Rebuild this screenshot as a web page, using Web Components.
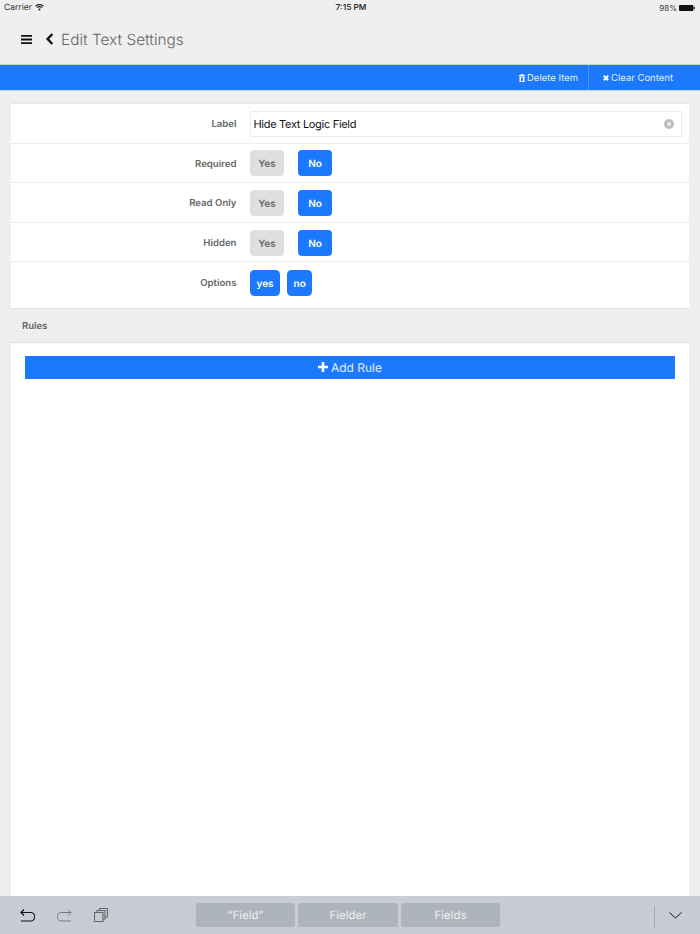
<!DOCTYPE html>
<html>
<head>
<meta charset="utf-8">
<title>Edit Text Settings</title>
<style>
    html, body { margin: 0; height: 100%; }
    body {
        width: 700px;
        height: 934px;
        overflow: hidden;
        display: flex;
        flex-direction: column;
        background: #efefef;
        font-family: Inter, "Liberation Sans", sans-serif;
        text-rendering: geometricPrecision;
    }
</style>
</head>
<body>
<app-status-bar></app-status-bar>
<app-header>Edit Text Settings</app-header>
<app-action-bar></app-action-bar>
<settings-panel>
    <setting-row label="Label"><clear-input value="Hide Text Logic Field"></clear-input></setting-row>
    <setting-row label="Required"><yes-no></yes-no></setting-row>
    <setting-row label="Read Only"><yes-no></yes-no></setting-row>
    <setting-row label="Hidden"><yes-no></yes-no></setting-row>
    <setting-row label="Options" last><pill-btn on>yes</pill-btn><pill-btn on>no</pill-btn></setting-row>
</settings-panel>
<rules-panel></rules-panel>
<keyboard-bar></keyboard-bar>

<script>
class AppStatusBar extends HTMLElement {
    constructor() {
        super();
        this.attachShadow({ mode: "open" });
        this.shadowRoot.innerHTML = `
            <style>
                :host { display: grid; grid-template-columns: 1fr auto 1fr; align-items: center; height: 15px; padding: 0 5px 0 4px; font-size: 8.5px; color: #333; }
                .left { display: flex; align-items: center; gap: 3px; }
                .time { padding-left: 3px; font-weight: 600; font-size: 8.3px; }
                .right { display: flex; align-items: center; justify-content: flex-end; gap: 2px; font-size: 8px; }
                svg { display: block; }
            </style>
            <div class="left">Carrier
                <svg width="9" height="7" viewBox="0 0 10 8"><path d="M5 7.600 3.400 5.700a2.500 2.500 0 0 1 3.200 0zM2.500 4.700l-.8-1a5.200 5.200 0 0 1 6.600 0l-.8 1a4 4 0 0 0-5 0zM1 3 .1 2a7.600 7.600 0 0 1 9.800 0L9 3a6.300 6.300 0 0 0-8 0z" fill="#222"/></svg>
            </div>
            <div class="time">7:15 PM</div>
            <div class="right">98%
                <svg width="16" height="6" viewBox="0 0 16 6"><rect x="0" y="0" width="14.500" height="6" rx="1" fill="#111"/><rect x="15" y="2" width="1" height="2" fill="#111"/></svg>
            </div>`;
    }
}

class AppHeader extends HTMLElement {
    constructor() {
        super();
        this.attachShadow({ mode: "open" });
        this.shadowRoot.innerHTML = `
            <style>
                :host { display: flex; align-items: center; box-sizing: border-box; height: 50px; padding: 0 0 1px 21px; border-bottom: 1px solid #c9ccd0; color: #666; font-size: 15.400px; font-weight: 300; }
                .menu { margin-right: 14px; }
                .back { margin-right: 7px; }
                svg { display: block; }
            </style>
            <svg class="menu" width="11" height="9" viewBox="0 0 11 9"><path d="M0 0h11v1.800H0zM0 3.600h11v1.800H0zM0 7.200h11V9H0z" fill="#111"/></svg>
            <svg class="back" width="8" height="12" viewBox="0 0 8 12"><path d="M6.300 1 1.600 6l4.700 5" fill="none" stroke="#111" stroke-width="2.400"/></svg>
            <slot></slot>`;
    }
}

class AppActionBar extends HTMLElement {
    constructor() {
        super();
        this.attachShadow({ mode: "open" });
        this.shadowRoot.innerHTML = `
            <style>
                :host { display: flex; justify-content: flex-end; box-sizing: border-box; height: 26px; background: #1c79fe; border-bottom: 1px solid #c9d5e4; color: #e3eeff; font-size: 9.500px; }
                .act { display: flex; align-items: center; gap: 2px; }
                .act span { padding-top: 2px; }
                .del { padding-right: 10px; border-right: 1px solid #4a93fb; }
                .clr { padding: 0 27px 0 14px; }
                svg { display: block; }
            </style>
            <div class="act del">
                <svg width="6" height="8" viewBox="0 0 6 8"><path d="M1.800 0h2.400v1H6v1H0V1h1.800zM.5 2.500h5V8h-5zM2 3.500V7h2V3.500z" fill="#fff" fill-rule="evenodd"/></svg>
                <span>Delete Item</span>
            </div>
            <div class="act clr">
                <svg width="6" height="6" viewBox="0 0 6 6"><path d="M.8.8l4.400 4.400M5.200.8.8 5.200" stroke="#fff" stroke-width="2"/></svg>
                <span>Clear Content</span>
            </div>`;
    }
}

class SettingsPanel extends HTMLElement {
    constructor() {
        super();
        this.attachShadow({ mode: "open" });
        this.shadowRoot.innerHTML = `
            <style>
                :host { display: block; margin: 11px 11px 0; background: #fff; border-top: 2px solid #e6e8ea; border-bottom: 1px solid #e3e3e3; }
            </style>
            <slot></slot>`;
    }
}

class SettingRow extends HTMLElement {
    constructor() {
        super();
        this.attachShadow({ mode: "open" });
        this.shadowRoot.innerHTML = `
            <style>
                :host { display: grid; grid-template-columns: 225.500px 1fr; column-gap: 13.500px; align-items: center; box-sizing: border-box; height: 39.600px; padding: 1px 7px 0 0; border-bottom: 1px solid #ececec; }
                :host([last]) { height: 45.600px; border-bottom: 0; padding-bottom: 6px; }
                .name { padding-top: 2px; text-align: right; color: #666; font-size: 9.600px; font-weight: 600; }
                .ctl { display: flex; gap: 7px; }
            </style>
            <div class="name"></div>
            <div class="ctl"><slot></slot></div>`;
    }

    connectedCallback() {
        this.shadowRoot.querySelector(".name").textContent = this.getAttribute("label");
    }
}

class ClearInput extends HTMLElement {
    constructor() {
        super();
        this.attachShadow({ mode: "open" });
        this.shadowRoot.innerHTML = `
            <style>
                :host { flex: 1; display: flex; align-items: center; justify-content: space-between; box-sizing: border-box; height: 26px; padding: 0 7px 0 2.500px; border: 1px solid #ececec; color: #111; font-size: 11px; letter-spacing: -0.300px; }
                svg { display: block; }
            </style>
            <span class="val"></span>
            <svg width="10" height="10" viewBox="0 0 10 10"><circle cx="5" cy="5" r="5" fill="#bdbdbd"/><path d="M3.300 3.300l3.400 3.400M6.700 3.300 3.300 6.700" stroke="#fff" stroke-width="1.100"/></svg>`;
    }

    connectedCallback() {
        this.shadowRoot.querySelector(".val").textContent = this.getAttribute("value");
    }
}

class PillBtn extends HTMLElement {
    constructor() {
        super();
        this.attachShadow({ mode: "open" });
        this.shadowRoot.innerHTML = `
            <style>
                :host { display: flex; align-items: center; justify-content: center; box-sizing: border-box; height: 26px; padding: 2px 6.500px 0; border-radius: 4.500px; background: #dfdfdf; color: #666; font-size: 10px; font-weight: 600; }
                :host([on]) { background: #1c79fe; color: #fff; }
                :host([wide]) { width: 34px; border-radius: 4px; }
            </style>
            <slot></slot>`;
    }
}

class YesNo extends HTMLElement {
    constructor() {
        super();
        this.attachShadow({ mode: "open" });
        this.shadowRoot.innerHTML = `
            <style>
                :host { display: flex; gap: 14px; }
            </style>
            <pill-btn wide>Yes</pill-btn>
            <pill-btn wide on>No</pill-btn>`;
    }
}

class RulesPanel extends HTMLElement {
    constructor() {
        super();
        this.attachShadow({ mode: "open" });
        this.shadowRoot.innerHTML = `
            <style>
                :host { flex: 1; display: flex; flex-direction: column; margin: 0 11px; }
                .title { display: flex; align-items: center; box-sizing: border-box; height: 34px; padding: 3px 0 0 11px; border-bottom: 1px solid #e0e0e0; color: #666; font-size: 9.500px; font-weight: 600; }
                .body { flex: 1; background: #fff; padding: 13px 14px; }
                .add { display: flex; align-items: center; justify-content: center; gap: 3px; height: 23px; background: #1c79fe; color: #e3eeff; font-size: 12px; }
                svg { display: block; }
            </style>
            <div class="title">Rules</div>
            <div class="body">
                <div class="add">
                    <svg width="10" height="10" viewBox="0 0 10 10"><path d="M5 0v10M0 5h10" stroke="#fff" stroke-width="2.600"/></svg>
                    Add Rule
                </div>
            </div>`;
    }
}

class KeyboardBar extends HTMLElement {
    constructor() {
        super();
        this.attachShadow({ mode: "open" });
        this.shadowRoot.innerHTML = `
            <style>
                :host { display: flex; align-items: center; box-sizing: border-box; height: 38px; flex: none; padding-left: 20px; background: #c9ccd4; }
                svg { display: block; }
                .tools { display: flex; align-items: center; gap: 22px; width: 175.700px; }
                .keys { display: flex; gap: 3px; }
                .key { display: flex; align-items: center; justify-content: center; height: 24.600px; border-radius: 3px; background: #adb4bb; color: #eef0f2; font-size: 11.500px; }
                .k1 { width: 99.500px; }
                .k2 { width: 99.700px; }
                .sep { align-self: flex-start; width: 1px; height: 22px; margin: 10px 0 0 154px; background: #a3a7ad; }
                .chev { margin-left: 14px; }
            </style>
            <div class="tools">
                <svg width="15" height="13" viewBox="0 0 15 13"><path d="M1 3.500h9.500a3.800 3.800 0 0 1 0 8.500H1M4 .5 1 3.500l3 3" fill="none" stroke="#111" stroke-width="1.200"/></svg>
                <svg width="15" height="13" viewBox="0 0 15 13"><path d="M14 3.500H4.500a3.800 3.800 0 0 0 0 8.500H14M11 .5l3 3-3 3" fill="none" stroke="#777" stroke-width="1"/></svg>
                <svg width="14" height="14" viewBox="0 0 14 14"><path d="M.5 4.500h8.500v9H.5zM3 4.500V2.500h8v8.500H9M5.500 2.500V.5h8v8.500H11" fill="none" stroke="#666" stroke-width="1.100"/></svg>
            </div>
            <div class="keys">
                <div class="key k1">“Field”</div>
                <div class="key k2">Fielder</div>
                <div class="key k1">Fields</div>
            </div>
            <div class="sep"></div>
            <svg class="chev" width="13" height="7" viewBox="0 0 13 7"><path d="M.5.5 6.500 6 12.500.5" fill="none" stroke="#111" stroke-width="1"/></svg>`;
    }
}

customElements.define("app-status-bar", AppStatusBar);
customElements.define("app-header", AppHeader);
customElements.define("app-action-bar", AppActionBar);
customElements.define("settings-panel", SettingsPanel);
customElements.define("setting-row", SettingRow);
customElements.define("clear-input", ClearInput);
customElements.define("pill-btn", PillBtn);
customElements.define("yes-no", YesNo);
customElements.define("rules-panel", RulesPanel);
customElements.define("keyboard-bar", KeyboardBar);
</script>
</body>
</html>
